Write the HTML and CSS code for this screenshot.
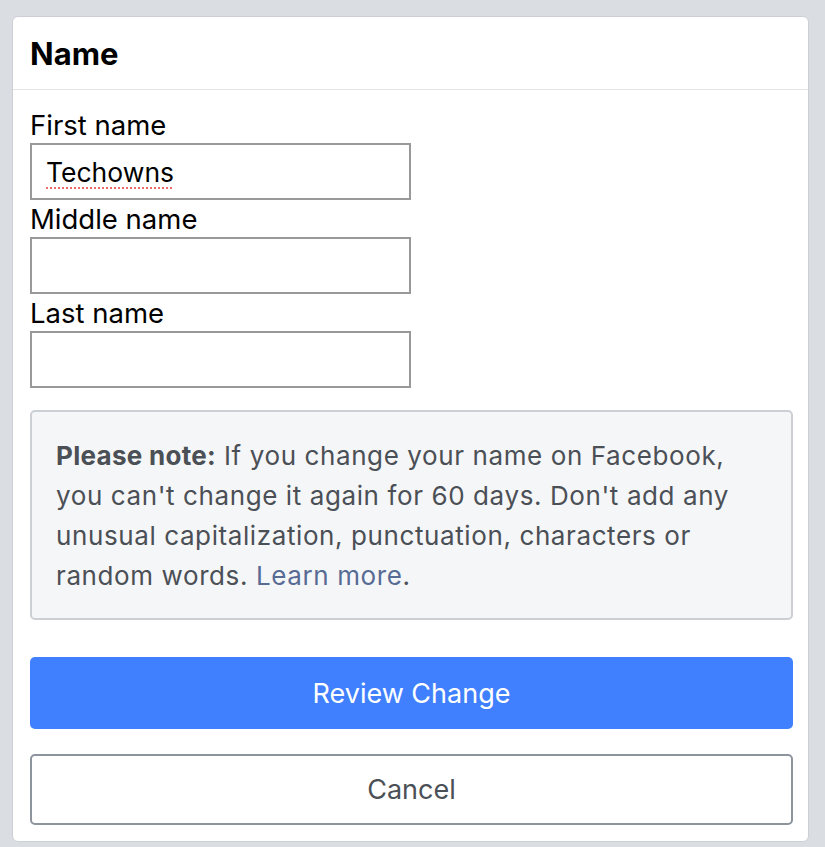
FILE: index.html
```html
<!DOCTYPE html>
<html lang="en">
<head>
<meta charset="utf-8">
<title>Name</title>
<link rel="stylesheet" href="styles.css">
</head>
<body>
<div class="card">
  <div class="card-header">Name</div>
  <form class="card-body">
    <label class="label" for="first">First name</label>
    <div class="field" id="first"><span class="misspelled">Techowns</span></div>
    <label class="label" for="middle">Middle name</label>
    <div class="field" id="middle"></div>
    <label class="label" for="last">Last name</label>
    <div class="field" id="last"></div>
    <div class="note">
      <strong>Please note:</strong> If you change your name on Facebook, you can't change it again for 60 days. Don't add any unusual capitalization, punctuation, characters or random words. <a href="#" class="link">Learn more</a>.
    </div>
    <button type="button" class="btn btn-primary">Review Change</button>
    <button type="button" class="btn btn-secondary">Cancel</button>
  </form>
</div>
</body>
</html>
```

FILE: styles.css
```css
* { box-sizing: border-box; }

html, body {
  margin: 0;
  padding: 0;
  background: #dadde1;
  font-family: Inter, "Liberation Sans", sans-serif;
  color: #000;
}

body {
  padding: 16px 16px 6px 12px;
}

.card {
  background: #fff;
  border: 1px solid #ccd0d5;
  border-radius: 6px;
}

.card-header {
  height: 73px;
  display: flex;
  align-items: center;
  padding-left: 17px;
  font-size: 31px;
  font-weight: 700;
  border-bottom: 1px solid #e2e4e8;
}

.card-body {
  display: flex;
  flex-direction: column;
  padding: 16px 15px 16px 17px;
}

.label {
  font-size: 27.5px;
  line-height: 37px;
  height: 37px;
  padding-top: 1px;
}

.field {
  width: 381px;
  height: 57px;
  border: 2px solid #999;
  display: flex;
  align-items: center;
  padding-left: 14px;
  font-size: 26.5px;
  padding-top: 1px;
}

.misspelled {
  text-decoration: underline dotted #f26b6b;
  text-decoration-thickness: 2px;
  text-underline-offset: 5px;
}

.note {
  margin-top: 22px;
  background: #f5f6f7;
  border: 2px solid #ccd0d5;
  border-radius: 5px;
  padding: 24px 24px 22px 24px;
  font-size: 26px;
  letter-spacing: 0.6px;
  line-height: 40px;
  color: #4b4f56;
}

.note strong {
  font-weight: 700;
  letter-spacing: 0.3px;
}

.link {
  color: #576b95;
  text-decoration: none;
}

.btn {
  font-family: inherit;
  font-size: 27px;
  border-radius: 5px;
  cursor: pointer;
}

.btn-primary {
  margin-top: 37px;
  height: 72px;
  background: #4080ff;
  border: none;
  color: #fff;
}

.btn-secondary {
  margin-top: 25px;
  height: 71px;
  background: #fff;
  border: 2px solid #8d949e;
  color: #4b4f56;
}
```
